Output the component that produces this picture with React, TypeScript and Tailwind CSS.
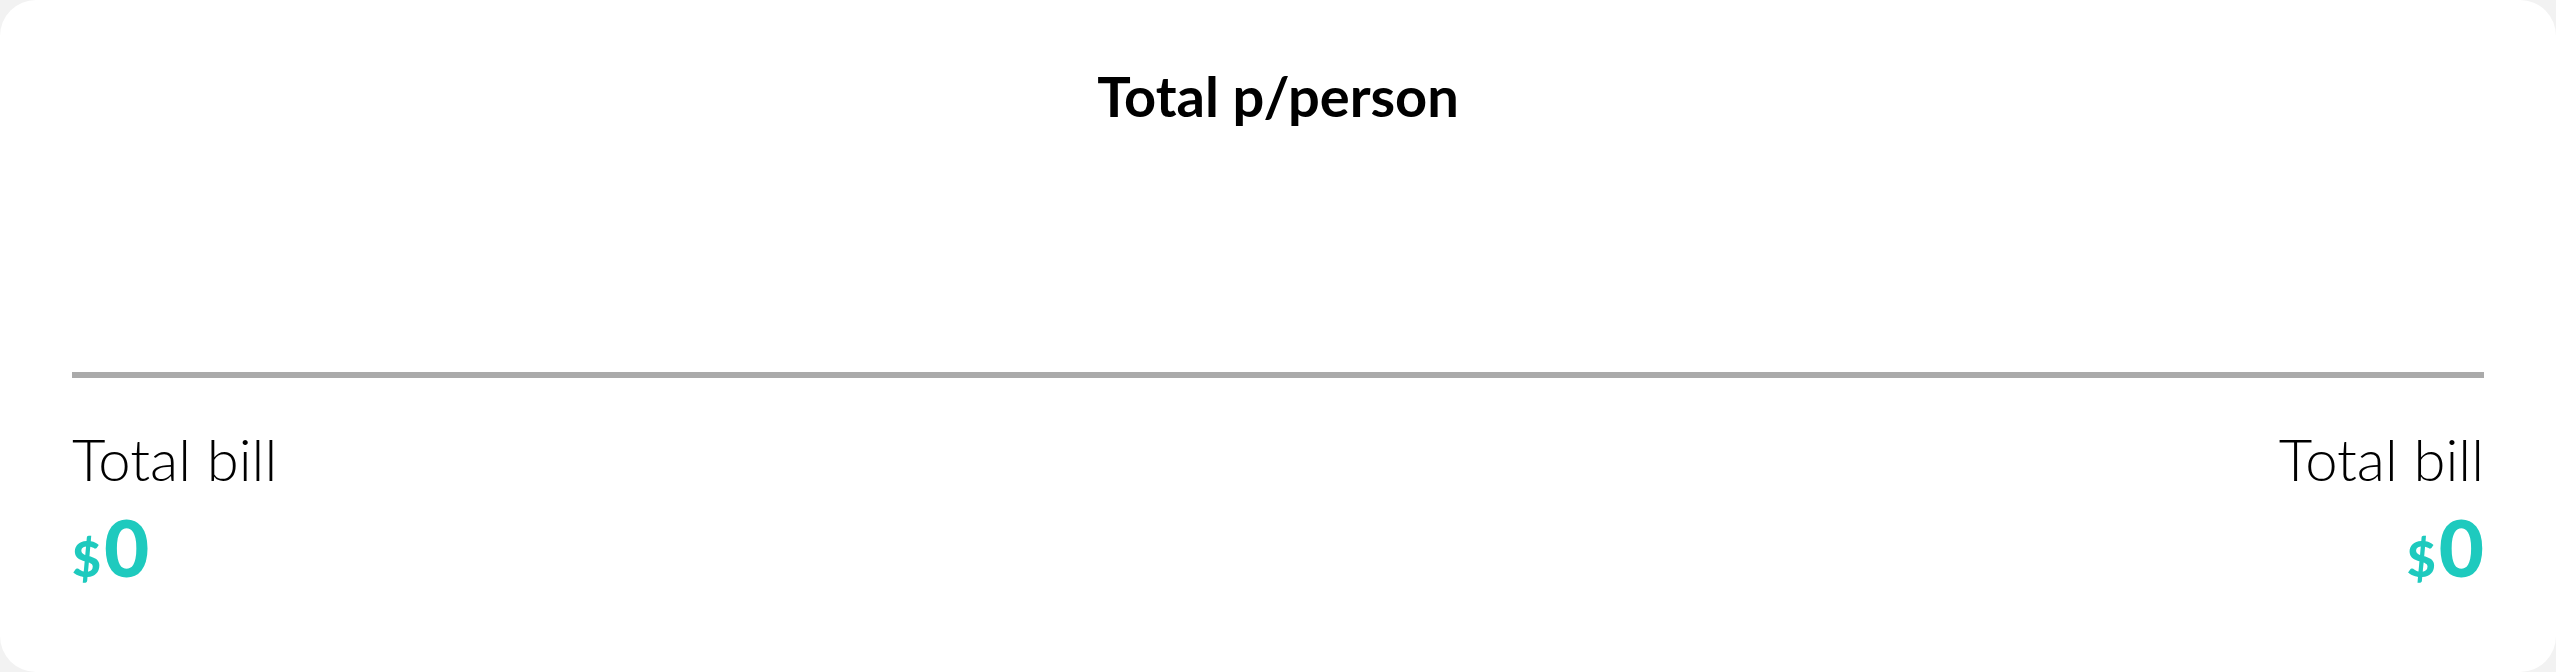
import React from 'react';

const BillTotal: React.FC<{ align: 'left' | 'right' }> = ({ align }) => {
  const right = align === 'right';
  return (
    <div className={right ? 'flex flex-col items-end' : 'flex flex-col items-start'}>
      <div className="text-[58px] font-light leading-none text-black">Total bill</div>
      <div className="mt-[20px] flex items-baseline leading-none text-[#1ecabe] font-black">
        <span className="text-[50px] mr-[3px]">$</span>
        <span className="text-[78px]">0</span>
      </div>
    </div>
  );
};

const App: React.FC = () => {
  return (
    <div className="w-[2556px] h-[672px] bg-[#f2f2f2] font-['Lato','Noto_Sans',sans-serif]">
      <div className="h-full bg-white rounded-[36px] px-[72px] flex flex-col">
        <h1 className="pt-[68px] text-center text-[56px] font-bold leading-none text-black">
          Total p/person
        </h1>
        <div className="mt-[248px] h-[6px] bg-[#aaaaaa]" />
        <div className="mt-[52px] flex justify-between">
          <BillTotal align="left" />
          <BillTotal align="right" />
        </div>
      </div>
    </div>
  );
};

export default App;
